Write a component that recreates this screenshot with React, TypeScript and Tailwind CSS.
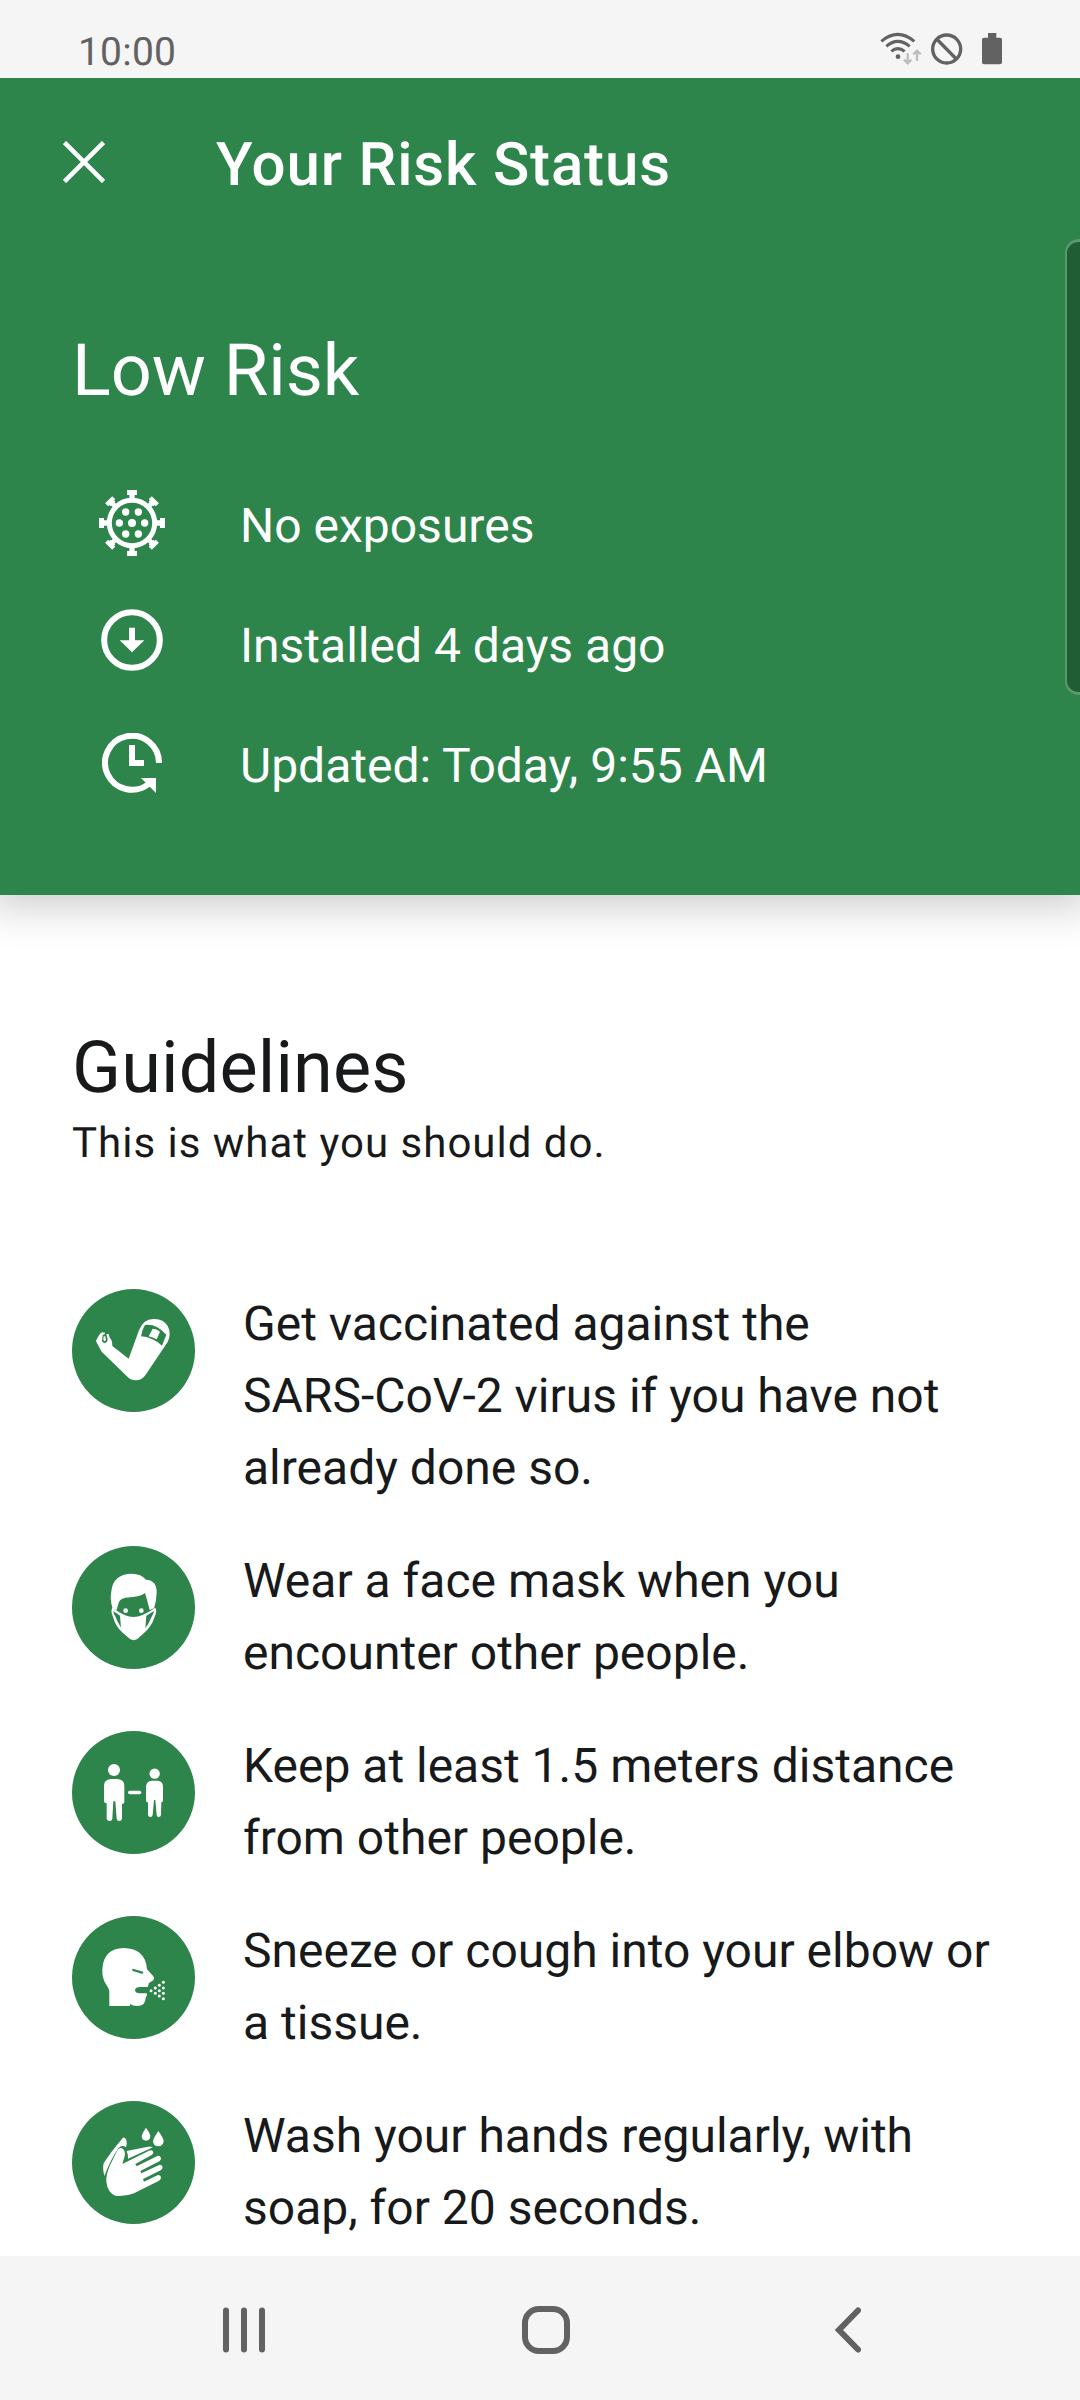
import type { ReactNode } from "react";

function StatusBar() {
  return (
    <div className="relative z-10 flex h-[78px] shrink-0 items-center justify-between bg-[#f5f5f5] pr-[76px] pl-[78px] pt-[24px] text-[#626262]">
      <span className="mt-[1px] text-[39px] leading-[48px] tracking-[0.2px]">10:00</span>
      <svg className="mb-[4px] h-[34px] w-[124px]" viewBox="120 96 372 102" fill="none" stroke="#626262">
        <path d="M124 124Q173 82 223 124M139 139Q173 109 209 139M154 154Q173 138 194 154" strokeWidth="9" />
        <circle cx="174" cy="170" r="7" fill="#626262" stroke="none" />
        <path d="M203 160v28M192 179l11 11 11-11M231 183v-28M220 163l11-11 11 11" stroke="#bdbfbf" strokeWidth="7" />
        <circle cx="320" cy="147" r="42" strokeWidth="10" />
        <path d="M290 117l59 60" strokeWidth="10" />
        <path d="M444 99h25v14h11q6 0 6 6v68q0 6-6 6h-48q-6 0-6-6v-68q0-6 6-6h12z" fill="#626262" stroke="none" />
      </svg>
    </div>
  );
}

function VirusIcon() {
  return (
    <svg className="mb-[2px] h-[66px] w-[66px]" viewBox="-99 -99 198 198" fill="#fff">
      <circle r="68" fill="none" stroke="#fff" strokeWidth="15" />
      {[0, 90, 180, 270].map((a) => (
        <path key={a} transform={`rotate(${a})`} d="M-15-99h30v15h-7v12h-16v-12h-7z" />
      ))}
      {[45, 135, 225, 315].map((a) => (
        <path key={a} transform={`rotate(${a})`} d="M-15-99h30v13h-5v5h-3v10h-14v-10h-3v-5h-5z" />
      ))}
      <circle r="12" />
      <circle cx="-38" r="11" />
      <circle cx="38" r="11" />
      <circle cx="-19" cy="-33" r="11" />
      <circle cx="19" cy="-33" r="11" />
      <circle cx="-19" cy="33" r="11" />
      <circle cx="19" cy="33" r="11" />
    </svg>
  );
}

function InstalledIcon() {
  return (
    <svg className="mb-[8px] h-[62px] w-[62px]" viewBox="-93 -93 186 186" fill="#fff">
      <circle r="83.500" fill="none" stroke="#fff" strokeWidth="18" />
      <path d="M-9-37H9V1H37L0 37-37 1H-9z" />
    </svg>
  );
}

function UpdatedIcon() {
  return (
    <svg className="mb-[2px] h-[60px] w-[60px]" viewBox="-90 -90 180 180" fill="#fff">
      <path d="M81 0A81 81 0 1 0 50 63" fill="none" stroke="#fff" strokeWidth="18" />
      <path d="M27 45H72V90z" />
      <path d="M-9-54H9V-9H36V9H-9z" />
    </svg>
  );
}

function Circle({ children }: { children: ReactNode }) {
  return (
    <div className="h-[123px] w-[123px] shrink-0 rounded-full bg-[#2e854b]">
      <svg className="h-full w-full" viewBox="36 48 369 369" fill="#fff">
        {children}
      </svg>
    </div>
  );
}

const G = "#2e854b";

const guidelines = [
  {
    lines: ["Get vaccinated against the", "SARS-CoV-2 virus if you have not", "already done so."],
    icon: (
      <g transform="translate(0 -9)">
        <path d="M206 266L237 181Q249 148 280 147Q309 145 323 168Q335 190 323 216L257 314Q246 331 227 331Q213 331 203 321L125 245L109 216Q107 211 111 206L120 191L126 187L135 188L134 193L128 195L126 214L132 220L141 216L143 207L139 193L146 192L149 203Q157 209 157 228Z" />
        <path d="M131 199H136L138 211L133 214L130 209Z" />
        <path d="M255 165Q288 160 319 194L306 227Q277 201 243 199Q245 181 255 165Z" fill={G} />
        <path d="M278 176Q290 176 300 185L290 208Q279 202 266 199Z" />
      </g>
    ),
  },
  {
    lines: ["Wear a face mask when you", "encounter other people."],
    icon: (
      <>
        <path d="M158 236Q149 211 154 184Q159 132 215 131Q244 131 258 149Q291 151 290 188Q289 215 282 235L269 240Q262 212 255 189Q242 200 218 201L196 203Q176 207 174 225L170 240Z" />
        <circle cx="197" cy="242" r="7" />
        <circle cx="244" cy="242" r="7" />
        <path d="M157 233Q196 261 220 261Q245 261 286 233Q292 243 284 260Q275 290 248 313L231 328Q221 333 211 328L188 308Q165 288 159 260Q151 243 157 233Z" />
        <path d="M160 243L180 257L183 293Q172 275 167 261Q160 250 160 243ZM282 243L259 257L256 295Q267 281 273 264Q281 251 282 243Z" fill={G} />
      </>
    ),
  },
  {
    lines: ["Keep at least 1.5 meters distance", "from other people."],
    icon: (
      <>
        <circle cx="162" cy="165" r="18" />
        <path d="M152 192h21q20 2 20 20v49q0 6-7 6v44q-1 7-8 7t-8-7l-4-52h-6l-3 52q-1 7-8 7t-9-7v-46q-8 0-8-6v-47q0-18 20-20z" />
        <rect x="204" y="227" width="40" height="11" rx="5.500" />
        <circle cx="284" cy="176" r="15.500" />
        <path d="M275 197h18q16 2 16 17v42q0 6-5 6l-1 38q-1 6-7 6t-6-6l-4-45h-4l-4 45q-1 6-7 6t-7-6v-38q-6 0-6-5v-43q1-15 17-17z" />
      </>
    ),
  },
  {
    lines: ["Sneeze or cough into your elbow or", "a tissue."],
    icon: (
      <>
        <path d="M148 318V274Q146 263 137 251Q126 235 127 208Q130 145 191 144Q257 145 261 208L280 229Q285 235 280 241L267 249L263 261H240Q225 262 225 271Q226 280 240 280H260L261 285Q260 289 257 293Q257 318 231 318Q218 318 210 312V318Z" />
        <path d="M220 210L246 218" stroke={G} strokeWidth="7" strokeLinecap="round" />
        <circle cx="273" cy="272" r="4.500" />
        <circle cx="286" cy="264" r="4.500" />
        <circle cx="286" cy="280" r="4.500" />
        <circle cx="298" cy="256" r="4.500" />
        <circle cx="298" cy="272" r="4.500" />
        <circle cx="298" cy="288" r="4.500" />
        <circle cx="310" cy="247" r="4.500" />
        <circle cx="310" cy="264" r="4.500" />
        <circle cx="310" cy="280" r="4.500" />
        <circle cx="310" cy="296" r="4.500" />
      </>
    ),
  },
  {
    lines: ["Wash your hands regularly, with", "soap, for 20 seconds."],
    icon: (
      <>
        <path d="M258 128Q271 146 271 154Q270 167 258 167Q246 167 245 154Q246 146 258 128ZM295 138Q311 160 311 169Q309 184 295 184Q280 184 279 169Q280 160 295 138Z" />
        <path d="M133 273Q127 250 131 235Q148 206 189 158Q195 155 199 165Q202 178 198 187Q185 178 175 190Q153 222 133 273Z" />
        <path d="M200 198L264 185Q270 184 279 187L204 221Q205 210 200 198Z" />
        <path d="M139 290Q137 271 150 241L171 198Q179 184 188 191Q197 198 194 214L187 237L267 197Q277 193 280 201Q281 206 275 210L226 237L230 244L292 213Q300 211 303 219Q304 225 298 229L241 258L244 265L299 239Q306 239 308 246Q307 253 302 256L249 282L252 290L294 270Q302 270 303 278Q303 283 297 287L222 325Q199 335 168 333Q143 325 139 290Z" />
      </>
    ),
  },
];

const stats = [
  { icon: <VirusIcon />, text: "No exposures" },
  { icon: <InstalledIcon />, text: "Installed 4 days ago" },
  { icon: <UpdatedIcon />, text: "Updated: Today, 9:55 AM" },
];

export default function App() {
  return (
    <div className="relative flex h-[2400px] w-[1080px] flex-col overflow-hidden bg-white font-['Roboto',sans-serif] text-[#17191a] [text-rendering:geometricPrecision]">
      <StatusBar />
      <header className="relative h-[817px] shrink-0 bg-[#2e854b] text-white shadow-[0_2px_40px_10px_rgba(0,0,0,0.2)]">
        <div className="flex h-[168px] items-center pl-[63px]">
          <svg className="h-[42px] w-[42px]" viewBox="0 0 42 42" fill="none" stroke="#fff" strokeWidth="4.500">
            <path d="M1.500 1.500l39 39M40.500 1.500l-39 39" />
          </svg>
          <h1 className="mt-[5px] ml-[111px] text-[60px] leading-[72px] font-medium tracking-[0.85px]">Your Risk Status</h1>
        </div>
        <h2 className="mt-[83px] ml-[72px] text-[72px] leading-[84px]">Low Risk</h2>
        <ul className="mt-[51px]">
          {stats.map((s) => (
            <li key={s.text} className="flex h-[120px] items-center pl-[99px]">
              <span className="flex w-[66px] justify-center">{s.icon}</span>
              <span className="mt-[4px] ml-[75px] text-[48px] leading-[72px]">{s.text}</span>
            </li>
          ))}
        </ul>
      </header>
      <div className="absolute top-[239px] right-[-20px] h-[456px] w-[35px] rounded-[14px] border-y-[3px] border-l-2 border-[#59996c] bg-[#205c34]" />
      <main className="flex-1 overflow-hidden px-[72px] pt-[131px]">
        <h2 className="text-[72px] leading-[84px] tracking-[0.15px]">Guidelines</h2>
        <p className="mt-[4px] text-[42px] leading-[60px] tracking-[1px]">This is what you should do.</p>
        <ul className="mt-[115px] flex flex-col gap-[42px]">
          {guidelines.map((g) => (
            <li key={g.lines[0]} className="flex items-start gap-[48px]">
              <Circle>{g.icon}</Circle>
              <p className="mt-[-1px] text-[48px] leading-[72px] whitespace-nowrap">
                {g.lines.map((l) => (
                  <span key={l} className="block">{l}</span>
                ))}
              </p>
            </li>
          ))}
        </ul>
      </main>
      <nav className="flex h-[144px] shrink-0 items-center justify-between bg-[#f5f5f5] pr-[219px] pl-[223px]">
        <svg className="mt-[4px] h-[48px] w-[42px]" viewBox="0 0 42 48" stroke="#626262" strokeWidth="6" strokeLinecap="round">
          <path d="M3 4.500v39M21 4.500v39M39 4.500v39" />
        </svg>
        <svg className="mt-[4px] mr-[8px] h-[48px] w-[48px]" viewBox="0 0 48 48" fill="none" stroke="#626262" strokeWidth="6">
          <rect x="3" y="3" width="42" height="42" rx="14" />
        </svg>
        <svg className="mt-[4px] h-[48px] w-[26px]" viewBox="0 0 26 48" fill="none" stroke="#626262" strokeWidth="6" strokeLinecap="round">
          <path d="M23 4.500L4 24l19 19.500" />
        </svg>
      </nav>
    </div>
  );
}
